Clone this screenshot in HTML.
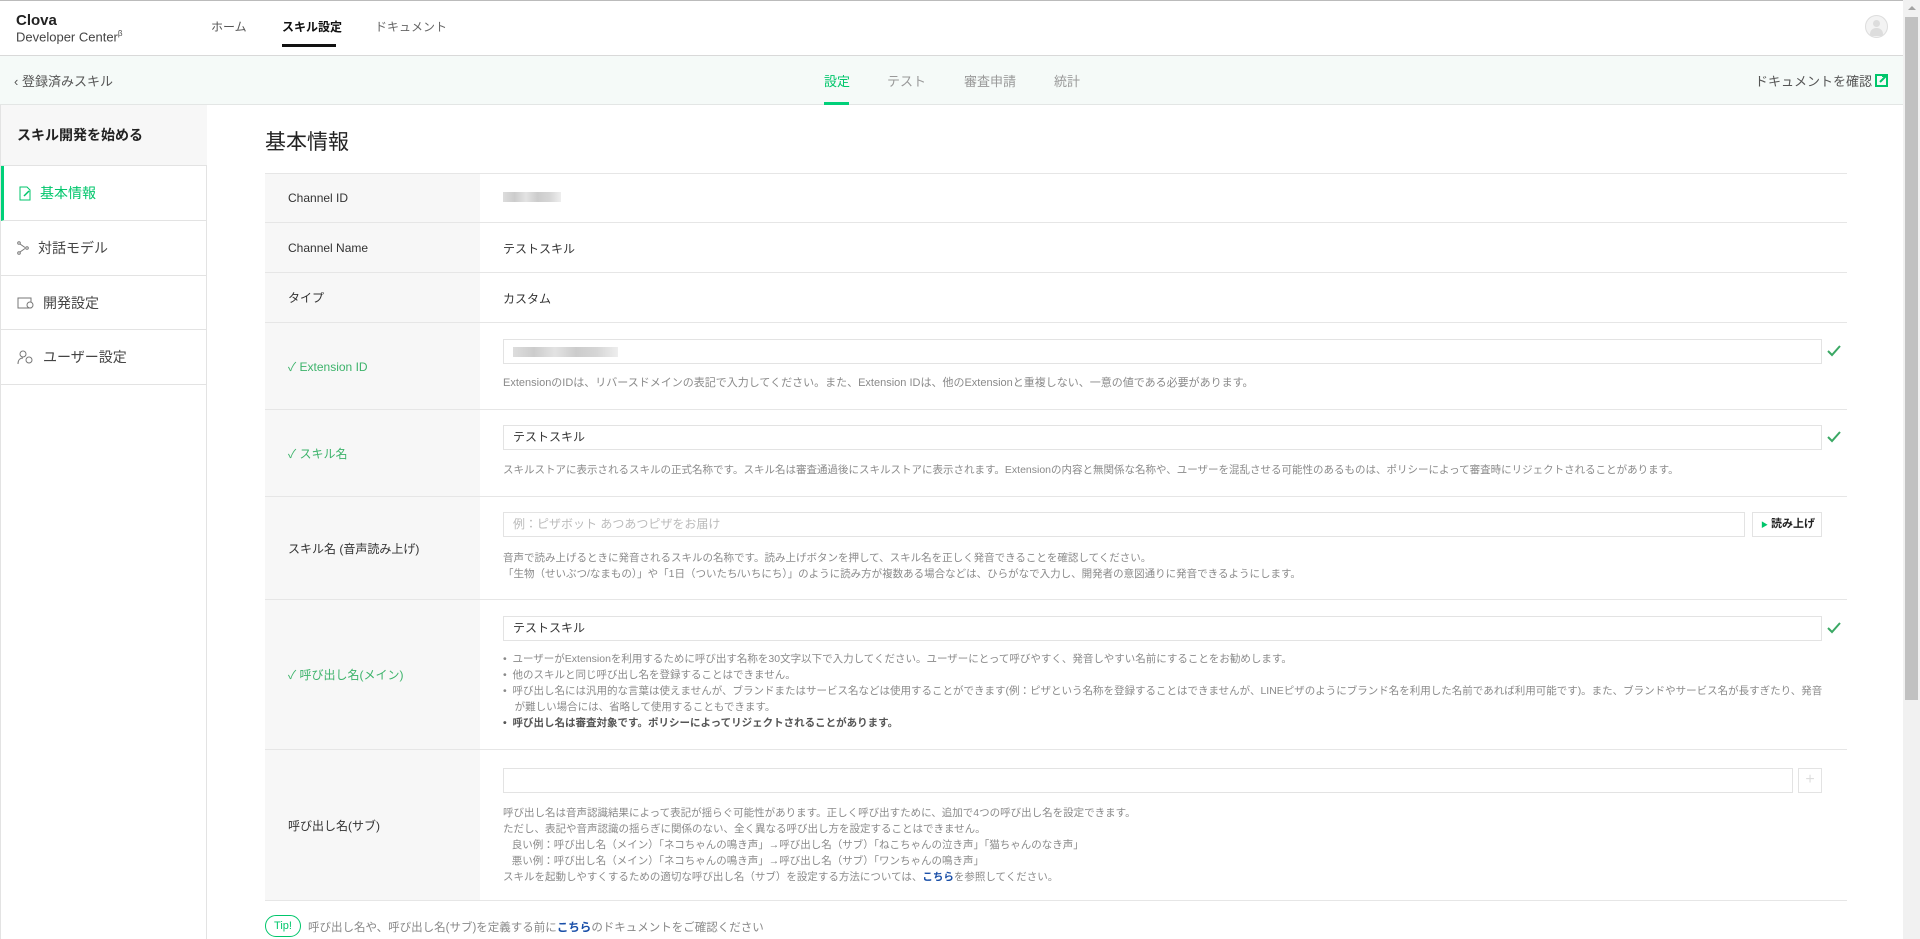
<!DOCTYPE html>
<html><head><meta charset="utf-8"><style>
*{margin:0;padding:0;box-sizing:border-box}
body{width:1920px;height:939px;overflow:hidden;background:#fff;font-family:"Liberation Sans","Noto Sans CJK JP",sans-serif;color:#333;position:relative}
.abs{position:absolute}
.hdr{left:0;top:0;width:1903px;height:56px;border-bottom:1px solid #d9d9d9;border-top:1px solid #bbb}
.sub{left:0;top:56px;width:1903px;height:49px;background:#f5faf8;border-bottom:1px solid #e3e6e5}
.side{left:0;top:105px;width:207px;height:834px;border-right:1px solid #e3e3e3;border-left:1px solid #e3e3e3}
.sitem{position:absolute;left:0;width:206px;border-bottom:1px solid #e3e3e3;font-size:14px;color:#444;display:flex;align-items:center;padding-left:16px}
.sitem svg{margin-right:8px}
.row{position:absolute;left:265px;width:1582px;border-top:1px solid #e6e6e6}
.lab{position:absolute;left:0;top:0;bottom:0;width:215px;background:#f7f7f7;font-size:12px;color:#333;display:flex;align-items:center;padding-left:23px}
.lab.g{color:#3db36b}
.val{position:absolute;left:238px;font-size:12px;color:#333}
.inp{position:absolute;left:503px;height:25px;border:1px solid #e3e3e3;background:#fff;font-size:12px;padding-left:9px;line-height:23px;color:#333}
.help{position:absolute;left:503px;font-size:11px;color:#8a8a8a;line-height:16px;white-space:nowrap}
.chk{position:absolute;left:1827px}
.blur{display:inline-block;height:10px;background:linear-gradient(90deg,#ddd,#ccc 20%,#e3e3e3 40%,#ccc 60%,#d6d6d6 80%,#eee)}
</style></head><body>
<div class="abs hdr">
 <div class="abs" style="left:16px;top:11px;font-size:15px;font-weight:bold;color:#222">Clova</div>
 <div class="abs" style="left:16px;top:28px;font-size:13px;color:#444">Developer Center<sup style="font-size:8px">β</sup></div>
 <div class="abs" style="left:211px;top:17px;font-size:12px;color:#555">ホーム</div>
 <div class="abs" style="left:282px;top:17px;font-size:12px;color:#111;font-weight:bold">スキル設定</div>
 <div class="abs" style="left:282px;top:43px;width:54px;height:3px;background:#111"></div>
 <div class="abs" style="left:375px;top:17px;font-size:12px;color:#666">ドキュメント</div>
 <div class="abs" style="left:1865px;top:14px;width:23px;height:23px;border-radius:50%;border:1px solid #ddd;background:#f3f3f3;overflow:hidden">
  <div class="abs" style="left:7px;top:4px;width:7px;height:7px;border-radius:50%;background:#ddd"></div>
  <div class="abs" style="left:4px;top:12px;width:13px;height:8px;border-radius:6px 6px 0 0;background:#ddd"></div>
 </div>
</div>
<div class="abs sub">
 <div class="abs" style="left:14px;top:15px;font-size:13px;color:#555">‹ 登録済みスキル</div>
 <div class="abs" style="left:824px;top:15px;font-size:13px;color:#00c66b">設定</div>
 <div class="abs" style="left:824px;top:46px;width:25px;height:3px;background:#00d079"></div>
 <div class="abs" style="left:887px;top:15px;font-size:13px;color:#999">テスト</div>
 <div class="abs" style="left:964px;top:15px;font-size:13px;color:#999">審査申請</div>
 <div class="abs" style="left:1054px;top:15px;font-size:13px;color:#999">統計</div>
 <div class="abs" style="left:1755px;top:15px;font-size:13px;color:#555">ドキュメントを確認</div>
 <svg class="abs" style="left:1875px;top:18px" width="13" height="13" viewBox="0 0 13 13"><rect x="1" y="1" width="11" height="11" fill="none" stroke="#00c66b" stroke-width="2"/><path d="M5 8L11 2M7 2h5v5" stroke="#00c66b" stroke-width="2" fill="none"/></svg>
</div>
<div class="abs side">
 <div class="sitem" style="top:0;height:61px;background:#f7f7f7;font-weight:bold;color:#222;font-size:14px">スキル開発を始める</div>
 <div class="sitem" style="top:61px;height:55px;color:#00c66b;border-left:3px solid #00d079;padding-left:15px"><svg width="13" height="15" viewBox="0 0 13 15"><path d="M1 1h7l3 3v10H1z" fill="none" stroke="#00c66b"/><path d="M5 10l5-5" stroke="#00c66b" stroke-width="1.5"/></svg>基本情報</div>
 <div class="sitem" style="top:116px;height:55px"><svg width="13" height="14" viewBox="0 0 13 14"><circle cx="2" cy="2" r="1.3" fill="none" stroke="#777"/><circle cx="2" cy="12" r="1.3" fill="none" stroke="#777"/><circle cx="10" cy="7" r="1.3" fill="none" stroke="#777"/><path d="M3 3l5 3.5M3 11l5-3.5" stroke="#777"/></svg>対話モデル</div>
 <div class="sitem" style="top:171px;height:54px"><svg width="18" height="14" viewBox="0 0 18 14"><rect x="1" y="2" width="13" height="10" fill="none" stroke="#777"/><circle cx="13" cy="9" r="3" fill="#fff" stroke="#777"/></svg>開発設定</div>
 <div class="sitem" style="top:225px;height:55px"><svg width="18" height="16" viewBox="0 0 18 16"><circle cx="6" cy="5" r="3" fill="none" stroke="#777"/><path d="M1 15c0-5 3-6 5-6" fill="none" stroke="#777"/><circle cx="12" cy="11" r="3" fill="none" stroke="#777"/></svg>ユーザー設定</div>
</div>

<div class="abs" style="left:265px;top:126px;font-size:21px;color:#222">基本情報</div>

<div class="row" style="top:173px;height:49px"><div class="lab">Channel ID</div><div class="val" style="top:17px"><span class="blur" style="width:58px"></span></div></div>
<div class="row" style="top:222px;height:50px"><div class="lab">Channel Name</div><div class="val" style="top:17px">テストスキル</div></div>
<div class="row" style="top:272px;height:50px"><div class="lab">タイプ</div><div class="val" style="top:17px">カスタム</div></div>
<div class="row" style="top:322px;height:87px"><div class="lab g">✓ Extension ID</div></div>
<div class="row" style="top:409px;height:87px"><div class="lab g">✓ スキル名</div></div>
<div class="row" style="top:496px;height:103px"><div class="lab">スキル名 (音声読み上げ)</div></div>
<div class="row" style="top:599px;height:150px"><div class="lab g">✓ 呼び出し名(メイン)</div></div>
<div class="row" style="top:749px;height:152px;border-bottom:1px solid #e6e6e6"><div class="lab">呼び出し名(サブ)</div></div>

<div class="inp" style="top:339px;width:1319px"><span class="blur" style="width:105px;vertical-align:middle"></span></div>
<svg class="chk" style="top:345px" width="14" height="12" viewBox="0 0 14 12"><path d="M1 6l4 4 8-9" fill="none" stroke="#3aa864" stroke-width="2"/></svg>
<div class="help" style="top:375px">ExtensionのIDは、リバースドメインの表記で入力してください。また、Extension IDは、他のExtensionと重複しない、一意の値である必要があります。</div>

<div class="inp" style="top:425px;width:1319px">テストスキル</div>
<svg class="chk" style="top:431px" width="14" height="12" viewBox="0 0 14 12"><path d="M1 6l4 4 8-9" fill="none" stroke="#3aa864" stroke-width="2"/></svg>
<div class="help" style="top:462px;font-size:10.5px">スキルストアに表示されるスキルの正式名称です。スキル名は審査通過後にスキルストアに表示されます。Extensionの内容と無関係な名称や、ユーザーを混乱させる可能性のあるものは、ポリシーによって審査時にリジェクトされることがあります。</div>

<div class="inp" style="top:512px;width:1242px;color:#bbb">例：ピザボット あつあつピザをお届け</div>
<div class="abs" style="left:1752px;top:512px;width:70px;height:25px;border:1px solid #e3e3e3;font-size:11px;color:#222;line-height:23px;padding-left:8px;font-weight:bold"><span style="color:#00c66b;font-size:7px">▶</span> 読み上げ</div>
<div class="help" style="top:550px;font-size:10.5px">音声で読み上げるときに発音されるスキルの名称です。読み上げボタンを押して、スキル名を正しく発音できることを確認してください。<br>「生物（せいぶつ/なまもの）」や「1日（ついたち/いちにち）」のように読み方が複数ある場合などは、ひらがなで入力し、開発者の意図通りに発音できるようにします。</div>

<div class="inp" style="top:616px;width:1319px">テストスキル</div>
<svg class="chk" style="top:622px" width="14" height="12" viewBox="0 0 14 12"><path d="M1 6l4 4 8-9" fill="none" stroke="#3aa864" stroke-width="2"/></svg>
<div class="help" style="top:651px;font-size:10.5px">
• &nbsp;ユーザーがExtensionを利用するために呼び出す名称を30文字以下で入力してください。ユーザーにとって呼びやすく、発音しやすい名前にすることをお勧めします。<br>
• &nbsp;他のスキルと同じ呼び出し名を登録することはできません。<br>
• &nbsp;呼び出し名には汎用的な言葉は使えませんが、ブランドまたはサービス名などは使用することができます(例：ピザという名称を登録することはできませんが、LINEピザのようにブランド名を利用した名前であれば利用可能です)。また、ブランドやサービス名が長すぎたり、発音<br>
&nbsp;&nbsp;&nbsp;&nbsp;が難しい場合には、省略して使用することもできます。<br>
<b style="color:#555">• &nbsp;呼び出し名は審査対象です。ポリシーによってリジェクトされることがあります。</b></div>

<div class="inp" style="top:768px;width:1290px"></div>
<div class="abs" style="left:1798px;top:768px;width:24px;height:25px;border:1px solid #e3e3e3;color:#ddd;text-align:center;line-height:22px;font-size:16px">+</div>
<div class="help" style="top:805px;font-size:10.5px">呼び出し名は音声認識結果によって表記が揺らぐ可能性があります。正しく呼び出すために、追加で4つの呼び出し名を設定できます。<br>
ただし、表記や音声認識の揺らぎに関係のない、全く異なる呼び出し方を設定することはできません。<br>
&nbsp;&nbsp;&nbsp;良い例：呼び出し名（メイン）「ネコちゃんの鳴き声」→呼び出し名（サブ）「ねこちゃんの泣き声」「猫ちゃんのなき声」<br>
&nbsp;&nbsp;&nbsp;悪い例：呼び出し名（メイン）「ネコちゃんの鳴き声」→呼び出し名（サブ）「ワンちゃんの鳴き声」<br>
スキルを起動しやすくするための適切な呼び出し名（サブ）を設定する方法については、<b style="color:#1a4fa8">こちら</b>を参照してください。</div>

<div class="abs" style="left:265px;top:915px;width:36px;height:22px;border:1px solid #00c66b;border-radius:11px;color:#00c66b;font-size:11px;text-align:center;line-height:20px">Tip!</div>
<div class="abs" style="left:308px;top:919px;font-size:11.5px;color:#888">呼び出し名や、呼び出し名(サブ)を定義する前に<b style="color:#1a4fa8">こちら</b>のドキュメントをご確認ください</div>

<div class="abs" style="left:1903px;top:0;width:17px;height:939px;background:#f1f1f1">
 <div class="abs" style="left:5px;top:6px;width:0;height:0;border-left:4px solid transparent;border-right:4px solid transparent;border-bottom:4px solid #a3a3a3"></div>
 <div class="abs" style="left:2px;top:17px;width:13px;height:683px;background:#c1c1c1"></div>
</div>
</body></html>
